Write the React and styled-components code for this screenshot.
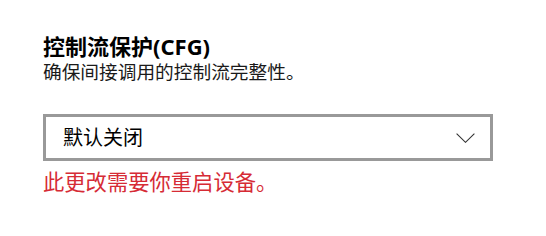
import React from 'react'
import styled, { createGlobalStyle } from 'styled-components'

const Global = createGlobalStyle`
  html, body {
    margin: 0;
    padding: 0;
    background: #ffffff;
  }
  body {
    font-family: "Noto Sans", "Noto Sans CJK SC", sans-serif;
    color: #000000;
  }
`

const Page = styled.div`
  width: 546px;
  height: 236px;
  box-sizing: border-box;
  padding: 32px 0 0 43px;
  display: flex;
  flex-direction: column;
`

const Title = styled.div`
  font-size: 22px;
  font-weight: 700;
  line-height: 28px;
`

const Description = styled.div`
  font-size: 18.7px;
  line-height: 24px;
  color: #1a1a1a;
`

const Select = styled.div`
  margin-top: 30px;
  width: 450px;
  height: 47px;
  box-sizing: border-box;
  border: 3px solid #999999;
  display: flex;
  align-items: center;
  justify-content: space-between;
  padding: 0 15px 0 17px;
`

const Value = styled.span`
  font-size: 20px;
  line-height: 24px;
`

const Chevron = () => (
  <svg width="19" height="10" viewBox="0 0 19 10">
    <path d="M0.6 0.6 L9.5 9.3 L18.4 0.6" fill="none" stroke="#333" strokeWidth="1.1" />
  </svg>
)

const Warning = styled.div`
  margin-top: 7px;
  font-size: 21.3px;
  line-height: 28px;
  color: #d62b35;
`

export default function App() {
  return (
    <>
      <Global />
      <Page>
        <Title>控制流保护(CFG)</Title>
        <Description>确保间接调用的控制流完整性。</Description>
        <Select>
          <Value>默认关闭</Value>
          <Chevron />
        </Select>
        <Warning>此更改需要你重启设备。</Warning>
      </Page>
    </>
  )
}
